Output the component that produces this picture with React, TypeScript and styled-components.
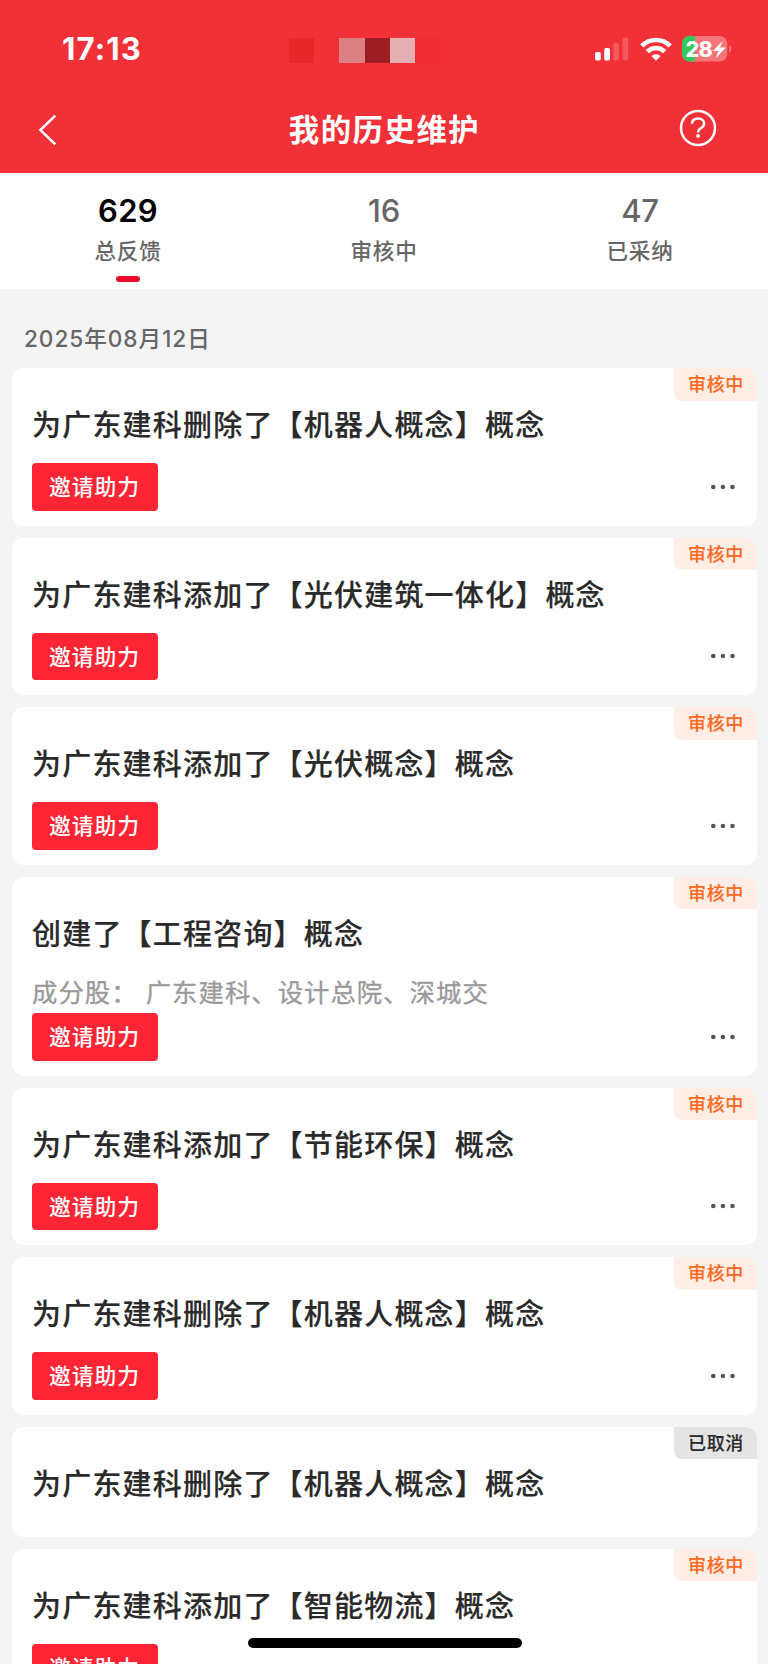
import React from "react";
import styled, { createGlobalStyle } from "styled-components";

const GlobalStyle = createGlobalStyle`
  * { box-sizing: border-box; }
  body {
    margin: 0;
    background: #f4f4f4;
    font-family: Inter, "Noto Sans CJK SC", sans-serif;
    overflow: hidden;
  }
`;

const Screen = styled.div`
  position: relative;
  width: 768px;
  height: 1664px;
  overflow: hidden;
  background: #f4f4f4;
`;

const Header = styled.header`
  height: 173.3px;
  background: #f23037;
  color: #fff;
`;

const StatusBar = styled.div`
  display: grid;
  grid-template-columns: 289px 1fr auto;
  align-items: center;
  height: 97px;
  padding-right: 36px;
`;

const Clock = styled.time`
  padding-left: 62px;
  font-size: 31px;
  font-weight: 750;
  line-height: 36px;
  letter-spacing: 1.2px;
`;

const Mosaic = styled.div`
  display: flex;
  height: 25.4px;
  margin-top: 4px;
`;

const Tile = styled.span<{ $color: string }>`
  width: 25.2px;
  background: ${(p) => p.$color};
`;

const Indicators = styled.div`
  display: flex;
  align-items: center;
`;

const NavBar = styled.nav`
  display: grid;
  grid-template-columns: 90px 1fr 90px;
  align-items: center;
  height: 66px;
`;

const NavTitle = styled.h1`
  margin: 0;
  padding-left: 1px;
  text-align: center;
  font-size: 30.4px;
  line-height: 44px;
  font-weight: 600;
  letter-spacing: 1.5px;
`;

const NavButton = styled.button<{ $side: "left" | "right" }>`
  display: flex;
  justify-content: ${(p) => (p.$side === "left" ? "flex-start" : "flex-end")};
  padding: ${(p) => (p.$side === "left" ? "0 0 0 36px" : "0 51px 4px 0")};
  border: 0;
  background: none;
  color: inherit;
`;

const Tabs = styled.div`
  display: grid;
  grid-template-columns: repeat(3, 1fr);
  height: 116px;
  background: #fff;
`;

const Tab = styled.div<{ $active?: boolean }>`
  display: flex;
  flex-direction: column;
  align-items: center;
  padding-top: 19px;
  color: #666;

  strong {
    font-size: 31px;
    line-height: 38px;
    font-weight: ${(p) => (p.$active ? 600 : 500)};
    letter-spacing: ${(p) => (p.$active ? "0.3px" : "-0.2px")};
    color: ${(p) => (p.$active ? "#000" : "#666")};
  }

  span {
    margin-top: 5px;
    font-size: 21.6px;
    line-height: 32px;
    font-weight: 500;
    letter-spacing: 0.8px;
  }

  &::after {
    content: "";
    width: 24px;
    height: 6px;
    margin-top: 8.5px;
    border-radius: 3px;
    background: ${(p) => (p.$active ? "#ed0b2b" : "transparent")};
  }
`;

const DateHeading = styled.h2`
  margin: 0;
  height: 79px;
  padding: 32px 24px 0;
  font-size: 22.6px;
  line-height: 36px;
  font-weight: 500;
  letter-spacing: 0.95px;
  color: #666;
`;

const List = styled.main`
  display: flex;
  flex-direction: column;
  gap: 12px;
  padding: 0 11px 0 12px;
`;

const Card = styled.article<{ $plain?: boolean }>`
  position: relative;
  flex: none;
  padding: 37px 20px ${(p) => (p.$plain ? "31.2px" : "15.1px")};
  border-radius: 12px;
  background: #fff;
  overflow: hidden;
`;

const Badge = styled.span<{ $cancelled?: boolean }>`
  position: absolute;
  top: 0;
  right: 0;
  width: 83px;
  height: 32.6px;
  padding-left: 1px;
  border-bottom-left-radius: 8px;
  text-align: center;
  font-size: 18px;
  line-height: 34px;
  font-weight: 500;
  letter-spacing: 0.6px;
  -webkit-text-stroke: 0.15px currentColor;
  color: ${(p) => (p.$cancelled ? "#2a2a2a" : "#ff6a1f")};
  background: ${(p) => (p.$cancelled ? "#e4e4e4" : "#ffeee6")};
`;

const CardTitle = styled.h3`
  margin: 0;
  font-size: 29px;
  line-height: 42px;
  font-weight: 500;
  letter-spacing: 1.2px;
  color: #2a2a2a;
  -webkit-text-stroke: 0.15px currentColor;
  white-space: nowrap;
`;

const Stocks = styled.p`
  margin: 16px 0 -16px;
  font-size: 25.4px;
  line-height: 41.4px;
  letter-spacing: 1px;
  color: #999;
  -webkit-text-stroke: 0.3px currentColor;
  white-space: pre;
`;

const CardFooter = styled.div`
  display: flex;
  justify-content: space-between;
  align-items: center;
  margin-top: 16px;
  padding-right: 1.5px;
`;

const InviteButton = styled.button`
  width: 126px;
  height: 47.4px;
  padding: 1px 1px 0 0;
  border: 0;
  border-radius: 4px;
  background: #ff2535;
  color: #fff;
  font: 500 21.8px/46px Inter, "Noto Sans CJK SC", sans-serif;
  letter-spacing: 0.9px;
`;

const HomeIndicator = styled.div`
  position: absolute;
  left: 248px;
  bottom: 16px;
  width: 274px;
  height: 10px;
  border-radius: 5px;
  background: #000;
`;

const SignalIcon = () => (
  <svg width="34" height="24" viewBox="0 0 34 24" fill="#fff">
    <rect x="0" y="15" width="5.8" height="8.5" rx="1.7" />
    <rect x="9.2" y="11" width="5.8" height="12.5" rx="1.7" />
    <rect x="18.4" y="6" width="5.6" height="17.5" rx="1.7" opacity=".2" />
    <rect x="27.6" y="0.5" width="5.6" height="23" rx="1.7" opacity=".2" />
  </svg>
);

const WifiIcon = () => (
  <svg width="32" height="24" viewBox="0 0 32 24" fill="none" stroke="#fff" strokeWidth="4.6">
    <path d="M1.8 8.9a20.2 20.2 0 0 1 28.4 0" />
    <path d="M7.3 14.6a12.4 12.4 0 0 1 17.4 0" />
    <path d="M16 23.8l-4.7-4.7a6.7 6.7 0 0 1 9.4 0z" fill="#fff" stroke="none" />
  </svg>
);

const BatteryIcon = () => (
  <svg width="50" height="26" viewBox="0 0 50 26">
    <clipPath id="battery-shell">
      <rect width="45.3" height="25.4" rx="7.5" />
    </clipPath>
    <g clipPath="url(#battery-shell)">
      <rect width="46" height="26" fill="#f6747a" />
      <rect width="13" height="26" fill="#34c759" />
    </g>
    <path d="M47 9c1.6.8 2.4 2 2.4 3.7s-.8 3-2.4 3.7z" fill="#f6747a" />
    <text x="3.6" y="20.5" fill="#fff" fontFamily="Inter, sans-serif" fontWeight="800" fontSize="21.5" letterSpacing="-.7">
      28
    </text>
    <path d="M40.4 5l-9.4 10h5.4l-2.700 7.400 10-10.800h-5.600z" fill="#fff" />
  </svg>
);

const Gap = styled.i<{ $w: number }>`
  width: ${(p) => p.$w}px;
`;

const BackIcon = () => (
  <svg width="24" height="32" viewBox="0 0 24 32" fill="none" stroke="#fff" strokeWidth="2.5">
    <path d="M19.3 1.7L4.3 16l15 14.3" />
  </svg>
);

const HelpIcon = () => (
  <svg width="38" height="38" viewBox="0 0 38 38" fill="none" stroke="#fff" strokeWidth="2.5">
    <circle cx="19" cy="19" r="17" />
    <path d="M13 14.8c.2-3.4 2.6-5.3 6.1-5.3 3.5 0 6 2 6 5 0 2.3-1.3 3.5-3.3 4.8-2 1.2-2.7 2.1-2.7 4.1" />
    <circle cx="19.1" cy="26.9" r="1.9" fill="#fff" stroke="none" />
  </svg>
);

const MoreIcon = () => (
  <svg width="26" height="8" viewBox="0 0 26 8" fill="#555">
    <circle cx="3.3" cy="4" r="2.3" />
    <circle cx="12.9" cy="4" r="2.3" />
    <circle cx="22.5" cy="4" r="2.3" />
  </svg>
);

const tiles = ["#e8272a", "#f23037", "#db8184", "#9e1d22", "#e5b0b4", "#f22c34"];

const stats = [
  { count: 629, label: "总反馈" },
  { count: 16, label: "审核中" },
  { count: 47, label: "已采纳" },
];

interface Entry {
  title: string;
  stocks?: string;
  cancelled?: boolean;
}

const entries: Entry[] = [
  { title: "为广东建科删除了【机器人概念】概念" },
  { title: "为广东建科添加了【光伏建筑一体化】概念" },
  { title: "为广东建科添加了【光伏概念】概念" },
  { title: "创建了【工程咨询】概念", stocks: "成分股： 广东建科、设计总院、深城交" },
  { title: "为广东建科添加了【节能环保】概念" },
  { title: "为广东建科删除了【机器人概念】概念" },
  { title: "为广东建科删除了【机器人概念】概念", cancelled: true },
  { title: "为广东建科添加了【智能物流】概念" },
];

export default function App() {
  return (
    <Screen>
      <GlobalStyle />
      <Header>
        <StatusBar>
          <Clock>17:13</Clock>
          <Mosaic>
            {tiles.map((color) => (
              <Tile key={color} $color={color} />
            ))}
          </Mosaic>
          <Indicators>
            <SignalIcon />
            <Gap $w={11} />
            <WifiIcon />
            <Gap $w={10} />
            <BatteryIcon />
          </Indicators>
        </StatusBar>
        <NavBar>
          <NavButton $side="left" aria-label="返回">
            <BackIcon />
          </NavButton>
          <NavTitle>我的历史维护</NavTitle>
          <NavButton $side="right" aria-label="帮助">
            <HelpIcon />
          </NavButton>
        </NavBar>
      </Header>
      <Tabs>
        {stats.map((stat, i) => (
          <Tab key={stat.label} $active={i === 0}>
            <strong>{stat.count}</strong>
            <span>{stat.label}</span>
          </Tab>
        ))}
      </Tabs>
      <DateHeading>2025年08月12日</DateHeading>
      <List>
        {entries.map((entry, i) => (
          <Card key={i} $plain={entry.cancelled}>
            <Badge $cancelled={entry.cancelled}>{entry.cancelled ? "已取消" : "审核中"}</Badge>
            <CardTitle>{entry.title}</CardTitle>
            {entry.stocks && <Stocks>{entry.stocks}</Stocks>}
            {!entry.cancelled && (
              <CardFooter>
                <InviteButton>邀请助力</InviteButton>
                <MoreIcon />
              </CardFooter>
            )}
          </Card>
        ))}
      </List>
      <HomeIndicator />
    </Screen>
  );
}
